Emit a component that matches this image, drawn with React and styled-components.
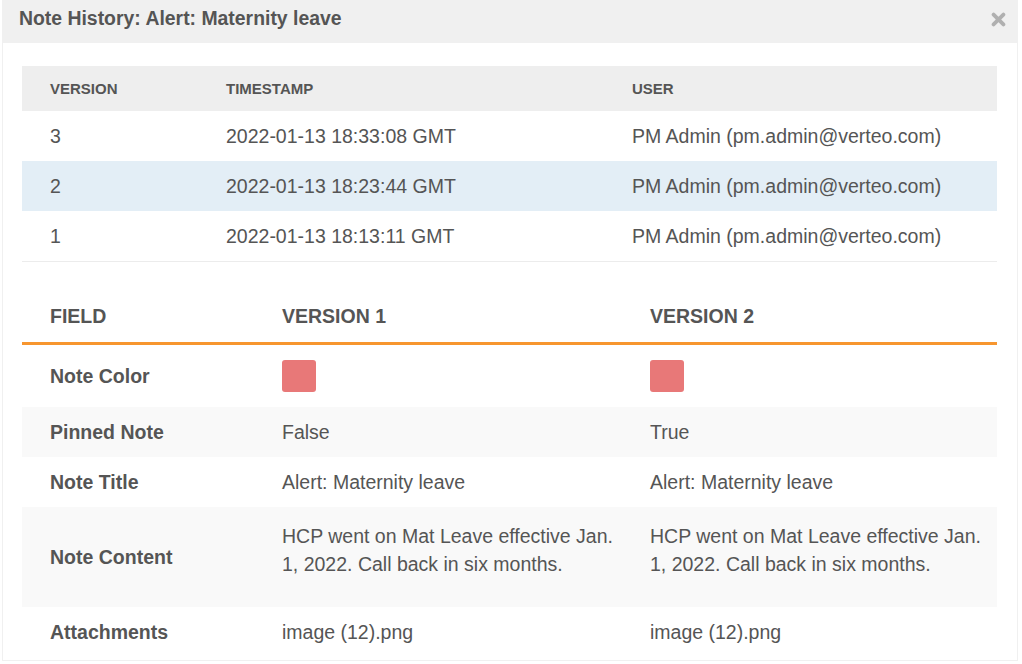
import React from "react";
import styled, { createGlobalStyle } from "styled-components";

const Global = createGlobalStyle`
  html, body { margin: 0; padding: 0; background: #ffffff; }
  body { font-family: "Liberation Sans", Arial, Helvetica, sans-serif; color: #555555; }
`;

const Modal = styled.div`
  margin-left: 2px;
  width: 1016px;
  height: 661px;
  border: 1px solid #f0f0f0;
  border-top: none;
  box-sizing: border-box;
  background: #fff;
  display: flex;
  flex-direction: column;
  overflow: hidden;
`;

const Header = styled.div`
  height: 43px;
  flex: none;
  background: #f0f0f0;
  display: flex;
  align-items: center;
  justify-content: space-between;
  padding: 0 11px 0 16px;
`;

const Title = styled.h2`
  margin: 0;
  font-size: 19.4px;
  font-weight: 700;
  color: #555555;
  line-height: 1;
  margin-top: -5px;
`;

const Close = styled.button`
  border: none;
  background: none;
  padding: 0;
  width: 16px;
  height: 16px;
  display: flex;
  align-items: center;
  justify-content: center;
  cursor: pointer;
  margin-top: -4px;
`;

const Body = styled.div`
  padding: 23px 20px 0 19px;
  display: flex;
  flex-direction: column;
  gap: 28px;
`;

const VersionTable = styled.div`
  display: flex;
  flex-direction: column;
  border-bottom: 1px solid #ececec;
`;

const VRow = styled.div`
  display: grid;
  grid-template-columns: 176px 406px 1fr;
  align-items: center;
  padding-left: 28px;
  height: ${(p) => (p.$head ? "45px" : "50px")};
  background: ${(p) => (p.$head ? "#eeeeee" : p.$active ? "#e3eef6" : "#ffffff")};
  font-size: ${(p) => (p.$head ? "15px" : "19.5px")};
  font-weight: ${(p) => (p.$head ? 700 : 400)};
  color: #555555;
`;

const CompareTable = styled.div`
  display: flex;
  flex-direction: column;
`;

const CRow = styled.div`
  display: grid;
  grid-template-columns: 206px 342px 1fr;
  column-gap: 26px;
  align-items: center;
  padding-left: 28px;
  background: ${(p) => (p.$striped ? "#f9f9f9" : "#ffffff")};
  border-bottom: ${(p) => (p.$head ? "3px solid #f7962f" : "none")};
  font-size: 19.5px;
  line-height: 28px;
  color: #555555;
`;

const Cell = styled.div`
  padding: ${(p) => (p.$head ? "12px 0 12px" : "11px 0")};
  font-weight: ${(p) => (p.$bold ? 700 : 400)};
`;

const Para = styled.p`
  margin: 4px 0 18px;
`;

const Swatch = styled.div`
  width: 34px;
  height: 32px;
  margin: 4px 0;
  border-radius: 3px;
  background: ${(p) => p.$color};
`;

const versions = [
  { v: "3", ts: "2022-01-13 18:33:08 GMT", user: "PM Admin (pm.admin@verteo.com)" },
  { v: "2", ts: "2022-01-13 18:23:44 GMT", user: "PM Admin (pm.admin@verteo.com)", active: true },
  { v: "1", ts: "2022-01-13 18:13:11 GMT", user: "PM Admin (pm.admin@verteo.com)" },
];

const CloseIcon = () => (
  <svg width="15" height="15" viewBox="0 0 15 15">
    <path d="M2.6 2.6 L12.4 12.4 M12.4 2.6 L2.6 12.4" stroke="#b0b0b0" strokeWidth="3.8" strokeLinecap="round" />
  </svg>
);

export default function App() {
  return (
    <>
      <Global />
      <Modal>
        <Header>
          <Title>Note History: Alert: Maternity leave</Title>
          <Close aria-label="Close"><CloseIcon /></Close>
        </Header>
        <Body>
          <VersionTable>
            <VRow $head>
              <div>VERSION</div>
              <div>TIMESTAMP</div>
              <div>USER</div>
            </VRow>
            {versions.map((r) => (
              <VRow key={r.v} $active={r.active}>
                <div>{r.v}</div>
                <div>{r.ts}</div>
                <div>{r.user}</div>
              </VRow>
            ))}
          </VersionTable>
          <CompareTable>
            <CRow $head>
              <Cell $head $bold>FIELD</Cell>
              <Cell $head $bold>VERSION 1</Cell>
              <Cell $head $bold>VERSION 2</Cell>
            </CRow>
            <CRow>
              <Cell $bold>Note Color</Cell>
              <Cell><Swatch $color="#e87878" /></Cell>
              <Cell><Swatch $color="#e87878" /></Cell>
            </CRow>
            <CRow $striped>
              <Cell $bold>Pinned Note</Cell>
              <Cell>False</Cell>
              <Cell>True</Cell>
            </CRow>
            <CRow>
              <Cell $bold>Note Title</Cell>
              <Cell>Alert: Maternity leave</Cell>
              <Cell>Alert: Maternity leave</Cell>
            </CRow>
            <CRow $striped>
              <Cell $bold>Note Content</Cell>
              <Cell><Para>HCP went on Mat Leave effective Jan. 1, 2022. Call back in six months.</Para></Cell>
              <Cell><Para>HCP went on Mat Leave effective Jan. 1, 2022. Call back in six months.</Para></Cell>
            </CRow>
            <CRow>
              <Cell $bold>Attachments</Cell>
              <Cell>image (12).png</Cell>
              <Cell>image (12).png</Cell>
            </CRow>
          </CompareTable>
        </Body>
      </Modal>
    </>
  );
}
